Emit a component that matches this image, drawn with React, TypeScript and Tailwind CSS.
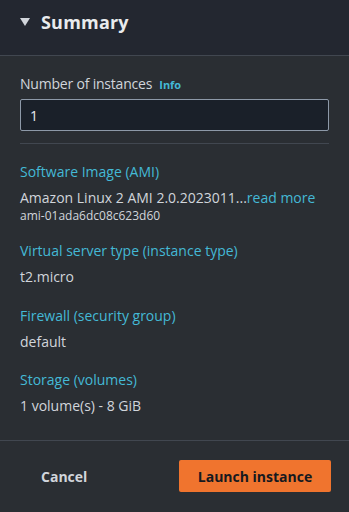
export default function App() {
  const font = { fontFamily: '"Open Sans", "Noto Sans", sans-serif' };
  const items = [
    { label: "Virtual server type (instance type)", value: "t2.micro", gap: "mt-[16px]" },
    { label: "Firewall (security group)", value: "default", gap: "mt-[18px]" },
    { label: "Storage (volumes)", value: "1 volume(s) - 8 GiB", gap: "mt-[17px]" },
  ];

  return (
    <div
      className="w-[349px] h-[512px] bg-[#2a2e33] text-[#d1d5db] flex flex-col overflow-hidden"
      style={font}
    >
      <div className="h-[56px] bg-[#232730] border-b border-[#414750] flex items-center pl-[20px] pb-[10px] gap-[11px]">
        <svg width="10" height="9" viewBox="0 0 10 9">
          <path d="M0 0 H10 L5 8 Z" fill="#d1d5db" />
        </svg>
        <span className="text-[18px] font-bold text-[#e9ebed] tracking-[0.2px]">Summary</span>
      </div>

      <div className="px-[20px] pt-[17px] flex flex-col">
        <div className="flex items-baseline gap-[7px] text-[14px] tracking-[-0.2px]">
          <span>Number of instances</span>
          <span className="text-[11px] font-bold text-[#44b9d6] tracking-normal">Info</span>
        </div>
        <div className="mt-[5px] h-[32px] border border-[#8d99a8] rounded-[2px] bg-[#1a2029] flex items-center px-[9px] text-[14px] text-[#e9ebed]">
          1
        </div>
        <div className="mt-[12px] border-t border-[#414750]" />

        <div className="mt-[17px] text-[14px] text-[#44b9d6]">Software Image (AMI)</div>
        <div className="mt-[5px] text-[14px]">
          Amazon Linux 2 AMI 2.0.2023011...<span className="text-[#44b9d6]">read more</span>
        </div>
        <div className="text-[12px] leading-[16px]">ami-01ada6dc08c623d60</div>

        {items.map((it) => (
          <div key={it.label} className={`${it.gap} flex flex-col`}>
            <div className="text-[14px] text-[#44b9d6]">{it.label}</div>
            <div className="mt-[5px] text-[14px]">{it.value}</div>
          </div>
        ))}
      </div>

      <div className="mt-[24px] border-t border-[#414750]" />
      <div className="flex items-center justify-between pl-[41px] pr-[18px] pt-[19px]">
        <span className="text-[14px] font-bold text-[#d1d5db]">Cancel</span>
        <button className="w-[152px] h-[32px] bg-[#f0742e] rounded-[2px] text-[14px] font-bold text-[#16191f]">
          Launch instance
        </button>
      </div>
    </div>
  );
}
